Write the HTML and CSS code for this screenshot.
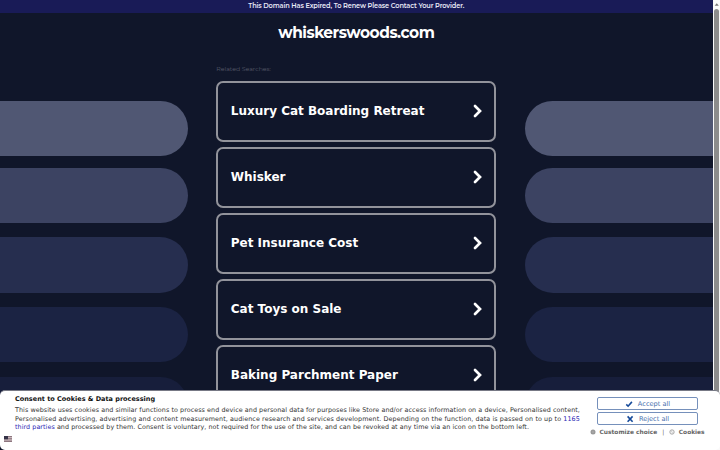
FILE: index.html
```
<!DOCTYPE html>
<html lang="en">
<head>
<meta charset="utf-8">
<title>whiskerswoods.com</title>
<link rel="stylesheet" href="styles.css">
</head>
<body>
<div class="window">
  <div class="page">
    <header class="banner"><span>This Domain Has Expired, To Renew Please Contact Your Provider.</span></header>
    <h1 class="domain"><span>whiskerswoods.com</span></h1>
    <div class="columns">
      <div class="pills left"><i class="p1"></i><i class="p2"></i><i class="p3"></i><i class="p4"></i><i class="p5"></i></div>
      <main class="results">
        <p class="related"><span>Related Searches:</span></p>
        <a class="card"><span>Luxury Cat Boarding Retreat</span><svg viewBox="0 0 10 14"><path d="M2 2l5 5-5 5"/></svg></a>
        <a class="card"><span>Whisker</span><svg viewBox="0 0 10 14"><path d="M2 2l5 5-5 5"/></svg></a>
        <a class="card"><span>Pet Insurance Cost</span><svg viewBox="0 0 10 14"><path d="M2 2l5 5-5 5"/></svg></a>
        <a class="card"><span>Cat Toys on Sale</span><svg viewBox="0 0 10 14"><path d="M2 2l5 5-5 5"/></svg></a>
        <a class="card"><span>Baking Parchment Paper</span><svg viewBox="0 0 10 14"><path d="M2 2l5 5-5 5"/></svg></a>
      </main>
      <div class="pills right"><i class="p1"></i><i class="p2"></i><i class="p3"></i><i class="p4"></i><i class="p5"></i></div>
    </div>
  </div>
  <div class="scrollbar"><svg class="up" viewBox="0 0 6 9"><path d="M.7 5.8l2.3-2.6 2.3 2.6z"/></svg><div class="thumb"></div></div>
</div>
<section class="consent">
  <div class="copy">
    <h2>Consent to Cookies &amp; Data processing</h2>
    <p><span class="l1">This website uses cookies and similar functions to process end device and personal data for purposes like Store and/or access information on a device, Personalised content,</span><br><span class="l2">Personalised advertising, advertising and content measurement, audience research and services development. Depending on the function, data is passed on to up to <a>1165</a></span><br><span class="l3"><a>third parties</a> and processed by them. Consent is voluntary, not required for the use of the site, and can be revoked at any time via an icon on the bottom left.</span></p>
  </div>
  <div class="actions">
    <button><svg viewBox="0 0 8 8"><path d="M1.3 4.4l1.8 1.8 3.8-4.3"/></svg><span>Accept all</span></button>
    <button><svg viewBox="0 0 8 8"><path d="M1.6 1.4l5 5.4M6.6 1.4l-5 5.4"/></svg><span>Reject all</span></button>
    <div class="links">
      <svg viewBox="0 0 6 6"><circle cx="3" cy="3" r="2.5" fill="#999"/><circle cx="3" cy="3" r=".7" fill="#bbb"/></svg>
      <b>Customize choice</b><span class="bar">|</span>
      <svg viewBox="0 0 6 6"><circle cx="3" cy="3" r="2.2" fill="#f2f2f2" stroke="#999" stroke-width=".8"/><path d="M2 2.3h.7M3.4 3.8h.7" stroke="#999" stroke-width=".6"/></svg>
      <b>Cookies</b>
    </div>
  </div>
  <svg class="flag" viewBox="0 0 8 6"><path fill="#e5d8da" d="M0 0h8v6H0z"/><path stroke="#79606a" stroke-width=".9" d="M0 .6h8M0 2.3h8M0 4h8M0 5.6h8"/><path fill="#353347" d="M0 0h4v3.3H0z"/></svg>
</section>
</body>
</html>
```

FILE: styles.css
```
* { box-sizing: border-box; }
body { margin: 0; width: 720px; height: 450px; overflow: hidden; background: #10162a; font-family: "DejaVu Sans", sans-serif; }
.window { display: flex; height: 450px; overflow: hidden; }
.page { width: 712.5px; flex: none; color: #fff; font-family: Montserrat, Inter, sans-serif; text-align: center; }
.banner { height: 13px; background: #191b57; font-size: 6.6px; letter-spacing: -.12px; line-height: 13px; font-weight: 600; white-space: nowrap; color: #e8e8f5; }
.domain { margin: 0; height: 49px; padding-top: 10px; font-size: 15.4px; letter-spacing: -.48px; line-height: 20px; font-weight: 700; }
.columns { display: grid; grid-template-columns: 188px 280px 188px; justify-content: space-between; text-align: left; }
.pills { padding-top: 39px; }
.pills i { display: block; height: 55.3px; margin-bottom: 14.4px; }
.left i { border-radius: 0 28px 28px 0; }
.right i { border-radius: 28px 0 0 28px; }
.pills .p1 { background: #505773; margin-bottom: 11.5px; }
.pills .p2 { background: #3c4362; }
.pills .p3 { background: #262e4f; }
.pills .p4 { background: #1b2343; }
.pills .p5 { background: #171e3b; }
.related { margin: 0; height: 19px; padding-top: 2px; font-size: 6.2px; line-height: 11px; color: #565a69; }
.card { display: flex; align-items: center; justify-content: space-between; height: 61px; margin-bottom: 5px; padding: 0 11.5px 1px 12.5px; border: 2px solid #92939b; border-radius: 7px; font: bold 12px "DejaVu Sans", sans-serif; }
.card svg { width: 10px; height: 14px; fill: none; stroke: #fff; stroke-width: 2.7; stroke-linecap: round; }
.scrollbar { width: 7.5px; background: #fafafa; padding: 0 1px; }
.up { display: block; height: 9px; width: 5.5px; fill: #777; }
.thumb { width: 5px; height: 390px; border-radius: 3px; background: #8c8c8c; }
.consent { position: absolute; left: 0; top: 390px; width: 720px; height: 60px; background: #fff; border-top: 1px solid #777985; border-radius: 5px; display: flex; color: #333; }
.copy { width: 597px; flex: none; padding: 4px 0 0 15px; white-space: nowrap; }
.copy h2 { margin: 0; font-size: 6.5px; line-height: 9px; color: #111; }
.copy p { margin: 2px 0 0; font-size: 6.4px; line-height: 8.5px; }
.l1 { letter-spacing: .058px; }
.l2 { letter-spacing: .092px; }
.l3 { letter-spacing: .055px; }
.copy a { color: #2b1fb5; }
.actions { width: 111px; flex: none; padding-top: 6px; }
.actions button { display: flex; align-items: center; justify-content: center; gap: 5px; width: 101px; height: 13px; margin: 0 0 2px; padding: 0; border: 1px solid #7590bb; border-radius: 2px; background: #fff; font: 6.6px "DejaVu Sans", sans-serif; color: #4770ad; }
.actions button svg { width: 8px; height: 8px; fill: none; stroke: #164a9a; stroke-width: 1.6; }
.links { display: flex; align-items: center; margin: 0 0 0 -7px; height: 10px; font-size: 5.9px; white-space: nowrap; color: #666; }
.links svg { width: 6px; height: 6px; margin-right: 3.5px; flex: none; }
.bar { margin: 0 5px; }
.flag { position: absolute; left: 3.5px; top: 44.5px; width: 8px; height: 6px; }
```
